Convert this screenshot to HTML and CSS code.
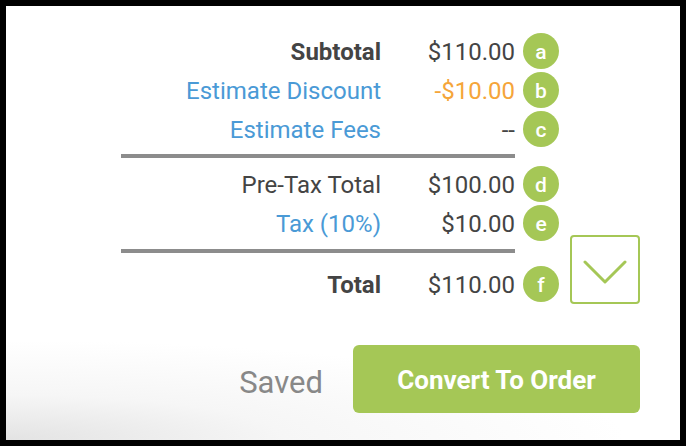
FILE: index.html
```html
<!DOCTYPE html>
<html lang="en">
<head>
<meta charset="utf-8">
<title>Estimate Summary</title>
<link rel="stylesheet" href="styles.css">
</head>
<body>
<div class="frame">
  <div class="panel">
    <div class="summary">
      <div class="label strong">Subtotal</div>
      <div class="value">$110.00</div>
      <div class="badge-cell"><span class="badge">a</span></div>

      <div class="label link">Estimate Discount</div>
      <div class="value discount">-$10.00</div>
      <div class="badge-cell"><span class="badge">b</span></div>

      <div class="label link">Estimate Fees</div>
      <div class="value">--</div>
      <div class="badge-cell"><span class="badge">c</span></div>

      <div class="rule rule-one"></div>

      <div class="label">Pre-Tax Total</div>
      <div class="value">$100.00</div>
      <div class="badge-cell"><span class="badge">d</span></div>

      <div class="label link">Tax (10%)</div>
      <div class="value">$10.00</div>
      <div class="badge-cell"><span class="badge">e</span></div>

      <div class="rule rule-two"></div>

      <div class="label strong">Total</div>
      <div class="value">$110.00</div>
      <div class="badge-cell"><span class="badge">f</span></div>

      <button class="toggle" type="button" aria-label="Expand">
        <svg width="44" height="24" viewBox="0 0 44 24" fill="none" stroke="#a5c756" stroke-width="3" stroke-linecap="round" stroke-linejoin="round"><path d="M2 2 L22 22 L42 2"/></svg>
      </button>
    </div>

    <div class="actions">
      <span class="status">Saved</span>
      <button class="convert" type="button">Convert To Order</button>
    </div>
  </div>
</div>
</body>
</html>
```

FILE: styles.css
```css
html, body {
  margin: 0;
  padding: 0;
  background: #000;
}

.frame {
  width: 674px;
  height: 434px;
  border: 6px solid #000;
  background: #fff;
}

.panel {
  box-sizing: border-box;
  width: 674px;
  height: 434px;
  padding: 25px 40px 0 0;
  display: flex;
  flex-direction: column;
  align-items: flex-end;
  font-family: Roboto, "Liberation Sans", sans-serif;
  color: #444;
  background: radial-gradient(ellipse 620px 100px at 0% 100%, #e3e3e3 0%, rgba(240,240,240,0.6) 45%, rgba(255,255,255,0) 100%), #fff;
}

.summary {
  display: grid;
  grid-template-columns: 260px 134px 44px 81px;
  grid-template-rows: 39px 39px 39px auto 39px 39px auto 39px;
  align-items: center;
}

.label {
  grid-column: 1;
  text-align: right;
  font-size: 24px;
  color: #444;
  white-space: nowrap;
  padding-top: 2px;
}

.label.strong {
  font-weight: 700;
}

.label.link {
  color: #4a9ad6;
}

.value {
  grid-column: 2;
  text-align: right;
  font-size: 24px;
  color: #444;
  white-space: nowrap;
  padding-top: 2px;
}

.value.discount {
  color: #f5a53a;
}

.badge-cell {
  grid-column: 3;
  display: flex;
  justify-content: flex-end;
}

.badge {
  width: 36px;
  height: 36px;
  border-radius: 50%;
  background: #a5c756;
  color: #fff;
  font-size: 21px;
  font-weight: 500;
  display: flex;
  align-items: center;
  justify-content: center;
  line-height: 1;
  padding-top: 4px;
  box-sizing: border-box;
}

.rule {
  grid-column: 1 / 3;
  height: 4px;
  background: #8c8c8c;
}

.rule-one {
  margin: 6px 0 6px 0;
}

.rule-two {
  margin: 7px 0 11px 0;
}

.toggle {
  grid-column: 4;
  grid-row: 6 / 9;
  align-self: end;
  justify-self: end;
  margin-bottom: -1px;
  width: 70px;
  height: 69px;
  box-sizing: border-box;
  border: 2px solid #a5c756;
  border-radius: 4px;
  background: #fff;
  padding: 0;
  display: flex;
  align-items: center;
  justify-content: center;
}

.toggle svg {
  display: block;
  margin-top: 4px;
}

.actions {
  margin-top: 42px;
  display: flex;
  align-items: center;
  gap: 30px;
}

.status {
  font-size: 31px;
  color: #888;
  padding-top: 6px;
}

.convert {
  width: 287px;
  height: 68px;
  border: none;
  border-radius: 6px;
  background: #a5c756;
  color: #fff;
  font-family: Roboto, "Liberation Sans", sans-serif;
  font-size: 26px;
  font-weight: 700;
  padding: 2px 0 0 0;
}
```
